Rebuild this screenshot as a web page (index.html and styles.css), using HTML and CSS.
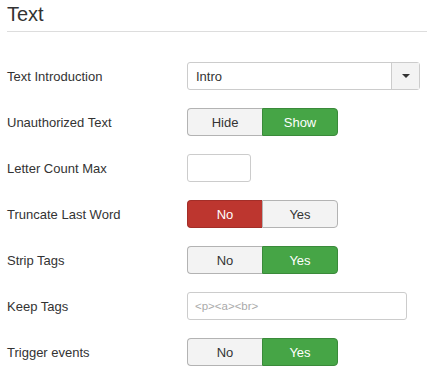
FILE: index.html
```html
<!DOCTYPE html>
<html>
<head>
<meta charset="utf-8">
<link rel="stylesheet" href="styles.css">
</head>
<body>
<div class="page">
  <h2 class="title">Text</h2>
  <div class="form">
    <div class="row">
      <div class="label">Text Introduction</div>
      <div class="select">
        <span class="select-value">Intro</span>
        <span class="select-btn"><span class="caret"></span></span>
      </div>
    </div>
    <div class="row">
      <div class="label">Unauthorized Text</div>
      <div class="toggle">
        <span class="btn">Hide</span>
        <span class="btn on-green">Show</span>
      </div>
    </div>
    <div class="row">
      <div class="label">Letter Count Max</div>
      <div class="input small"></div>
    </div>
    <div class="row">
      <div class="label">Truncate Last Word</div>
      <div class="toggle">
        <span class="btn on-red">No</span>
        <span class="btn">Yes</span>
      </div>
    </div>
    <div class="row">
      <div class="label">Strip Tags</div>
      <div class="toggle">
        <span class="btn">No</span>
        <span class="btn on-green">Yes</span>
      </div>
    </div>
    <div class="row">
      <div class="label">Keep Tags</div>
      <div class="input wide"><span class="placeholder">&lt;p&gt;&lt;a&gt;&lt;br&gt;</span></div>
    </div>
    <div class="row">
      <div class="label">Trigger events</div>
      <div class="toggle">
        <span class="btn">No</span>
        <span class="btn on-green">Yes</span>
      </div>
    </div>
  </div>
</div>
</body>
</html>
```

FILE: styles.css
```css
html, body {
  margin: 0;
  padding: 0;
  background: #fff;
}
body {
  font-family: "Liberation Sans", Arial, sans-serif;
  color: #333;
  font-size: 13px;
}
.page {
  padding: 0 0 0 7px;
}
.title {
  margin: 0;
  padding-top: 2px;
  padding-bottom: 5px;
  font-size: 20px;
  line-height: 24px;
  font-weight: normal;
  color: #333;
  border-bottom: 1px solid #ddd;
}
.form {
  margin-top: 30px;
  display: flex;
  flex-direction: column;
  gap: 18px;
}
.row {
  display: flex;
  align-items: center;
  height: 28px;
}
.label {
  width: 180px;
  flex: none;
}
.select {
  width: 233px;
  height: 28px;
  box-sizing: border-box;
  border: 1px solid #ccc;
  border-radius: 3px;
  display: flex;
  align-items: stretch;
}
.select-value {
  flex: 1;
  padding-left: 8px;
  display: flex;
  align-items: center;
}
.select-btn {
  width: 27px;
  border-left: 1px solid #ccc;
  background: #f3f3f3;
  display: flex;
  align-items: center;
  justify-content: center;
}
.caret {
  width: 0;
  height: 0;
  border-left: 4px solid transparent;
  border-right: 4px solid transparent;
  border-top: 4px solid #333;
}
.toggle {
  display: flex;
  height: 28px;
}
.btn {
  width: 75px;
  box-sizing: border-box;
  display: flex;
  align-items: center;
  justify-content: center;
  background: #f3f3f3;
  border: 1px solid #b3b3b3;
  color: #333;
}
.btn:first-child {
  border-radius: 4px 0 0 4px;
  border-right: none;
}
.btn:last-child {
  width: 76px;
  border-radius: 0 4px 4px 0;
}
.on-green {
  background: #46a546;
  border-color: #3a8a3a;
  color: #fff;
}
.on-red {
  background: #bd362f;
  border-color: #a32e28;
  color: #fff;
}
.input {
  height: 28px;
  box-sizing: border-box;
  border: 1px solid #ccc;
  border-radius: 3px;
  display: flex;
  align-items: center;
  padding-left: 7px;
}
.input.small {
  width: 64px;
}
.input.wide {
  width: 220px;
}
.placeholder {
  color: #aaa;
  font-size: 11.5px;
}
```
